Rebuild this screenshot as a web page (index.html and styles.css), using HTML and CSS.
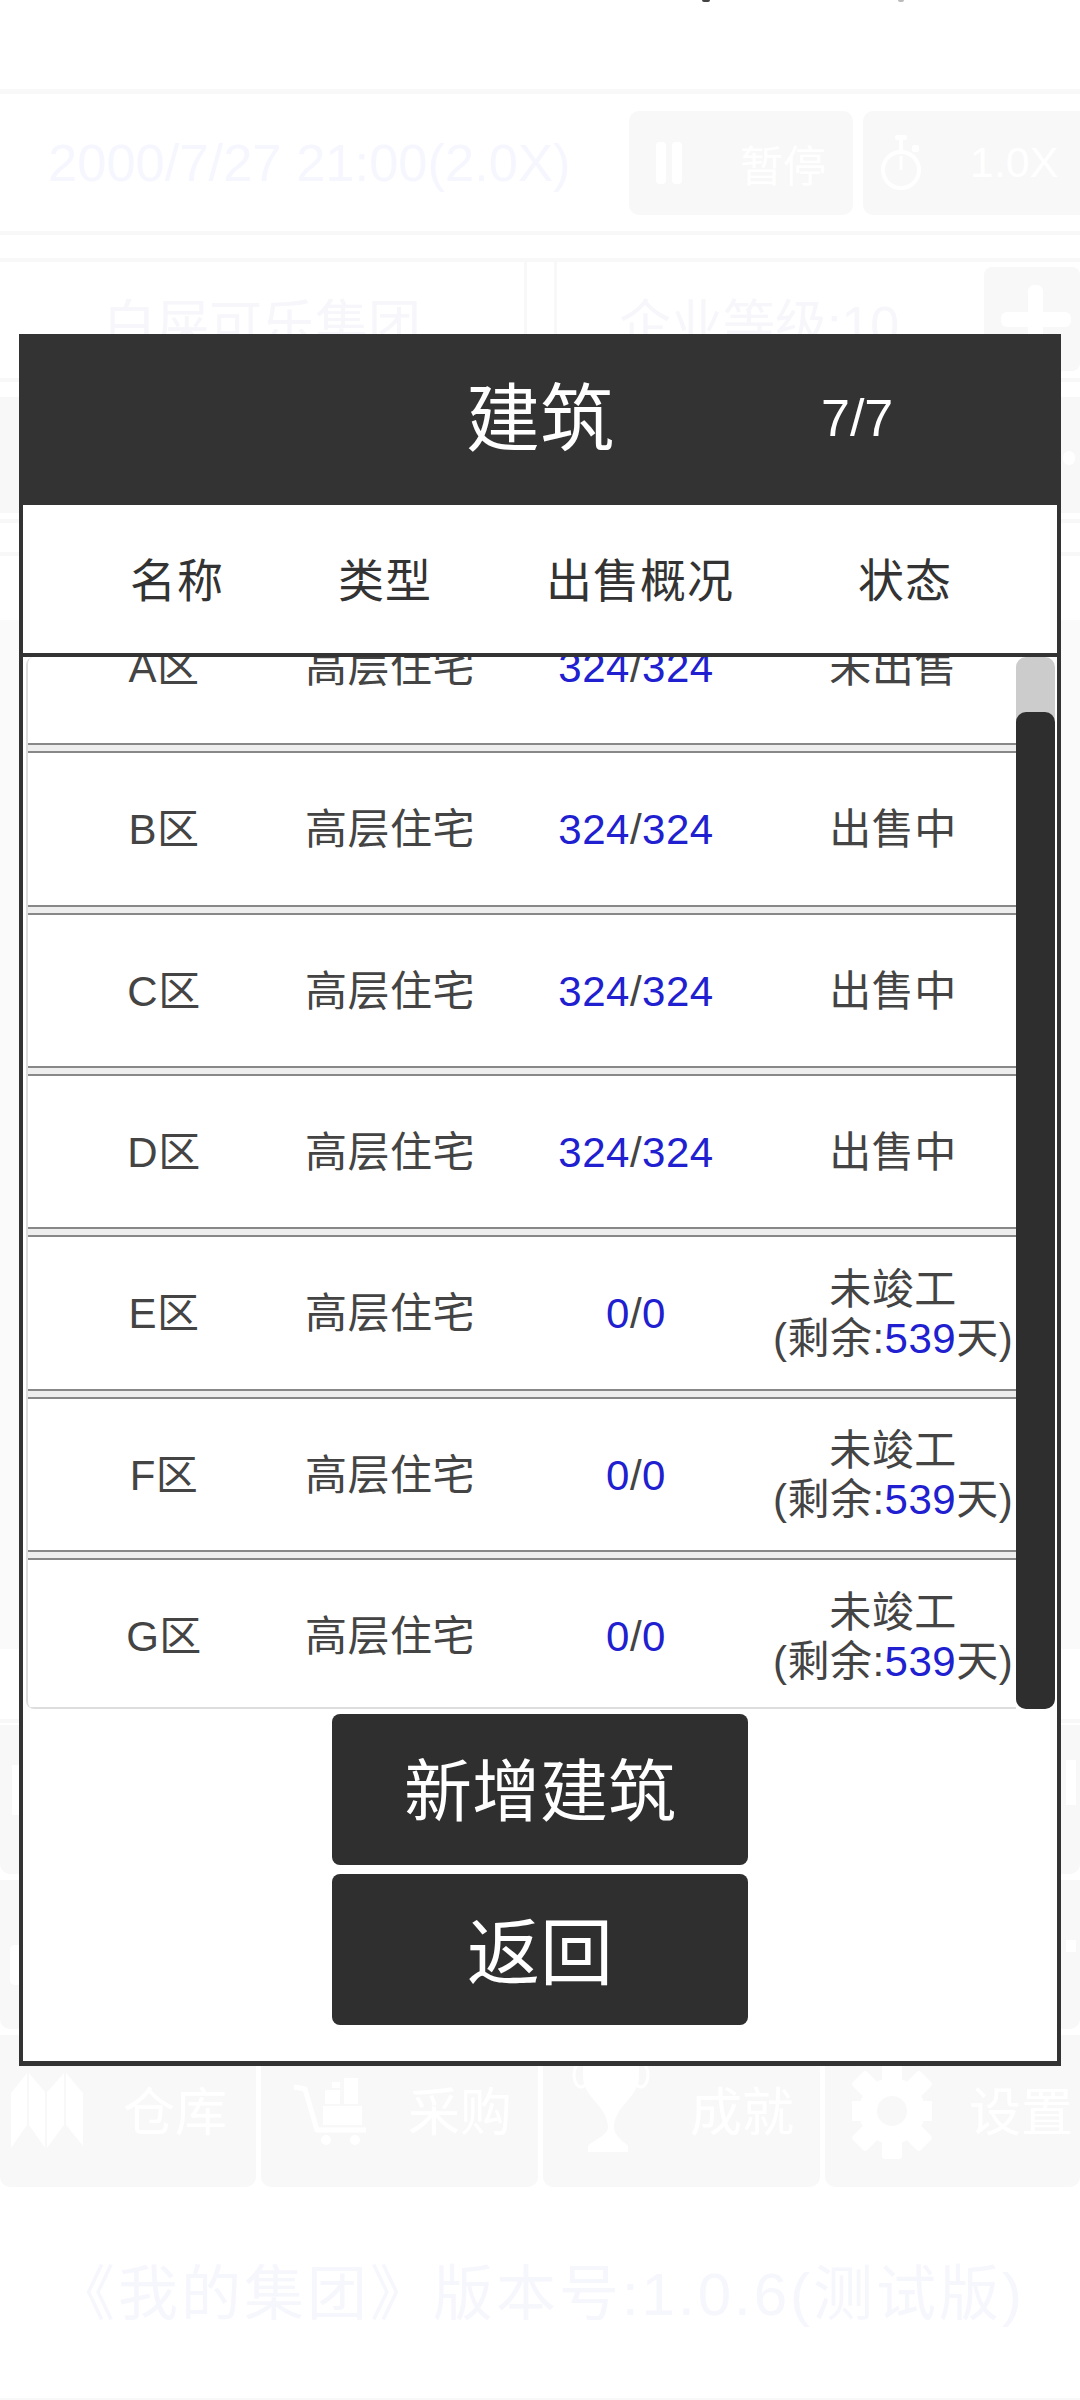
FILE: index.html
```html
<!DOCTYPE html>
<html lang="zh-cn">
<head>
    <meta charset="UTF-8">
    <title>我的集团</title>
    <link rel="stylesheet" href="styles.css">
</head>
<body>
    <!-- 背景页面 (被弹窗遮住, 颜色很淡) -->
    <div class="page">
        <div class="status-bar">
            <span class="status-mark status-mark-left"></span>
            <span class="status-mark status-mark-right"></span>
        </div>
        <div class="rule"></div>

        <div class="clock-row">
            <div class="clock-text">2000/7/27 21:00(2.0X)</div>
            <div class="clock-btn clock-btn-pause">
                <svg class="clock-icon" width="30" height="44" viewBox="0 0 30 44">
                    <rect x="2" y="1" width="10" height="42" rx="4" fill="#fff"/>
                    <rect x="18" y="1" width="10" height="42" rx="4" fill="#fff"/>
                </svg>
                <span class="clock-btn-label">暂停</span>
            </div>
            <div class="clock-btn clock-btn-speed">
                <svg class="clock-icon" width="44" height="60" viewBox="0 0 44 60">
                    <circle cx="22" cy="37" r="18" fill="none" stroke="#fff" stroke-width="4"/>
                    <rect x="16" y="2" width="12" height="5" rx="2" fill="#fff"/>
                    <rect x="20" y="6" width="4" height="12" fill="#fff"/>
                    <rect x="33" y="12" width="7" height="7" rx="2" fill="#fff"/>
                    <path d="M22 23 L22 37" stroke="#fff" stroke-width="3"/>
                </svg>
                <span class="clock-btn-label">1.0X</span>
            </div>
        </div>

        <div class="rule rule-thin"></div>
        <div class="rule rule-thin rule-gap"></div>

        <div class="company-row">
            <div class="company-box company-name">白屎可乐集团</div>
            <div class="company-box company-level">企业等级:10</div>
            <div class="plus-btn">
                <svg width="70" height="86" viewBox="0 0 70 86">
                    <rect x="27" y="0" width="15" height="86" rx="6" fill="#fff"/>
                    <rect x="0" y="27" width="70" height="15" rx="6" fill="#fff"/>
                </svg>
            </div>
        </div>

        <div class="rule rule-thin rule-after-company"></div>
        <div class="rule rule-thin rule-gap-small"></div>
        <div class="fund-row"><span class="fund-dot"></span></div>
        <div class="rule rule-thin rule-after-fund"></div>
        <div class="rule rule-thin rule-gap-wide"></div>

        <div class="panel"></div>

        <div class="rule rule-thin rule-after-panel"></div>
        <div class="tabs tabs-hidden">
            <div class="tab"><span class="tab-bit tab-bit-left"></span></div>
            <div class="tab"></div>
            <div class="tab"></div>
            <div class="tab"><span class="tab-bit tab-bit-right"></span></div>
        </div>
        <div class="tabs tabs-hidden">
            <div class="tab"><span class="tab-bit tab-bit-round"></span></div>
            <div class="tab"></div>
            <div class="tab"></div>
            <div class="tab"><span class="tab-bit tab-bit-right tab-bit-flat"></span></div>
        </div>

        <div class="tabs tabs-main">
            <div class="tab tab-store">
                <svg width="80" height="90" viewBox="0 0 80 90">
                    <polygon points="4,27 20,7 20,59 4,82" fill="#fff"/>
                    <polygon points="22,7 38,26 38,82 22,59" fill="#fff"/>
                    <polygon points="40,26 57,7 57,59 40,82" fill="#fff"/>
                    <polygon points="59,7 76,27 76,80 59,59" fill="#fff"/>
                </svg>
                <span class="tab-label">仓库</span>
            </div>
            <div class="tab tab-buy">
                <svg width="80" height="90" viewBox="0 0 80 90">
                    <path d="M4 21 L15 23 L27 64 L76 64" fill="none" stroke="#fff" stroke-width="5" stroke-linejoin="round"/>
                    <rect x="33" y="40" width="39" height="19" fill="#fff"/>
                    <rect x="35" y="24" width="15" height="14" fill="#fff"/>
                    <rect x="42" y="16" width="8" height="6" fill="#fff"/>
                    <rect x="54" y="12" width="14" height="26" fill="#fff"/>
                    <circle cx="36" cy="74" r="5" fill="#fff"/>
                    <circle cx="65" cy="74" r="5" fill="#fff"/>
                </svg>
                <span class="tab-label">采购</span>
            </div>
            <div class="tab tab-goal">
                <svg width="80" height="110" viewBox="0 0 80 110">
                    <path d="M13 0 L69 0 L69 28 C69 50 46 56 44 78 C44 88 50 90 58 98 L58 104 L18 104 L18 98 C26 90 38 88 38 78 C36 56 13 50 13 28 Z" fill="#fff"/>
                    <ellipse cx="11" cy="27" rx="7" ry="12" fill="none" stroke="#fff" stroke-width="3"/>
                    <ellipse cx="71" cy="27" rx="7" ry="12" fill="none" stroke="#fff" stroke-width="3"/>
                </svg>
                <span class="tab-label">成就</span>
            </div>
            <div class="tab tab-set">
                <svg width="80" height="100" viewBox="0 0 80 100">
                    <g fill="#fff">
                        <rect x="30" y="2" width="20" height="96" rx="3"/>
                        <rect x="30" y="2" width="20" height="96" rx="3" transform="rotate(45 40 50)"/>
                        <rect x="30" y="2" width="20" height="96" rx="3" transform="rotate(90 40 50)"/>
                        <rect x="30" y="2" width="20" height="96" rx="3" transform="rotate(135 40 50)"/>
                        <circle cx="40" cy="50" r="33"/>
                    </g>
                    <circle cx="40" cy="50" r="15" fill="#f8f8f8"/>
                </svg>
                <span class="tab-label">设置</span>
            </div>
        </div>

        <div class="version">《我的集团》版本号:1.0.6(测试版)</div>
        <div class="rule rule-thin rule-bottom"></div>
    </div>

    <!-- 建筑弹窗 -->
    <div class="modal">
        <div class="modal-head">
            <span></span>
            <span class="modal-title">建筑</span>
            <span class="modal-count">7/7</span>
        </div>

        <div class="col-head">
            <span>名称</span>
            <span>类型</span>
            <span>出售概况</span>
            <span>状态</span>
        </div>

        <div class="list">
            <div class="list-inner">
                <div class="row">
                    <span>A区</span>
                    <span>高层住宅</span>
                    <span><b class="num">324</b>/<b class="num">324</b></span>
                    <span>未出售</span>
                </div>
                <div class="row">
                    <span>B区</span>
                    <span>高层住宅</span>
                    <span><b class="num">324</b>/<b class="num">324</b></span>
                    <span>出售中</span>
                </div>
                <div class="row">
                    <span>C区</span>
                    <span>高层住宅</span>
                    <span><b class="num">324</b>/<b class="num">324</b></span>
                    <span>出售中</span>
                </div>
                <div class="row">
                    <span>D区</span>
                    <span>高层住宅</span>
                    <span><b class="num">324</b>/<b class="num">324</b></span>
                    <span>出售中</span>
                </div>
                <div class="row">
                    <span>E区</span>
                    <span>高层住宅</span>
                    <span><b class="num">0</b>/<b class="num">0</b></span>
                    <span class="status-two">未竣工<br>(剩余:<b class="num">539</b>天)</span>
                </div>
                <div class="row">
                    <span>F区</span>
                    <span>高层住宅</span>
                    <span><b class="num">0</b>/<b class="num">0</b></span>
                    <span class="status-two">未竣工<br>(剩余:<b class="num">539</b>天)</span>
                </div>
                <div class="row">
                    <span>G区</span>
                    <span>高层住宅</span>
                    <span><b class="num">0</b>/<b class="num">0</b></span>
                    <span class="status-two">未竣工<br>(剩余:<b class="num">539</b>天)</span>
                </div>
            </div>
            <div class="scroll-track"><div class="scroll-thumb"></div></div>
        </div>

        <div class="actions">
            <button type="button" class="action-btn">新增建筑</button>
            <button type="button" class="action-btn action-btn-back">返回</button>
        </div>
    </div>
</body>
</html>
```
FILE: styles.css
```css
* {
    box-sizing: border-box;
}
body {
    margin: 0;
    width: 1080px;
    height: 2400px;
    overflow: hidden;
    position: relative;
    background-color: #fff;
    font-family: "Liberation Sans", "Noto Sans CJK SC", sans-serif;
    color: #333;
}

/* 背景页面 */
.status-bar {
    height: 89px;
    position: relative;
}
.status-mark {
    position: absolute;
    top: 0;
    height: 2px;
    border-radius: 0 0 3px 3px;
}
.status-mark-left {
    left: 702px;
    width: 8px;
    background-color: #444;
}
.status-mark-right {
    left: 898px;
    width: 6px;
    background-color: #bbb;
}
.rule {
    height: 5px;
    background-color: #f8f8f8;
}
.rule-thin {
    height: 4px;
}
.rule-gap {
    margin-top: 23px;
}
.rule-after-company {
    margin-top: 3px;
}
.rule-gap-small {
    margin-top: 15px;
}
.rule-after-fund {
    margin-top: 6px;
}
.rule-gap-wide {
    margin-top: 29px;
}
.rule-after-panel {
    margin-top: 70px;
}
.clock-row {
    height: 137px;
    display: flex;
    align-items: center;
    padding-left: 48px;
}
.clock-text {
    width: 581px;
    flex: none;
    font-size: 52.5px;
    color: #f6f6ff;
    white-space: nowrap;
}
.clock-btn {
    height: 104px;
    background-color: #f8f8f8;
    border-radius: 10px;
    display: flex;
    align-items: center;
    flex: none;
}
.clock-btn-pause {
    width: 224px;
    padding-left: 25px;
}
.clock-btn-speed {
    width: 230px;
    margin-left: 10px;
    padding-left: 16px;
}
.clock-btn-pause .clock-btn-label {
    margin-left: 56px;
}
.clock-btn-speed .clock-btn-label {
    margin-left: 47px;
}
.clock-icon {
    flex: none;
}
.clock-btn-label {
    font-size: 43px;
    color: #fff;
    white-space: nowrap;
}
.company-row {
    height: 113px;
    display: flex;
    position: relative;
}
.company-box {
    font-size: 53px;
    color: #f6f6fb;
    white-space: nowrap;
    padding-top: 21px;
}
.company-name {
    width: 527px;
    padding-left: 103px;
    border-right: 3px solid #f8f8f8;
}
.company-level {
    width: 430px;
    margin-left: 27px;
    padding-left: 62px;
    border-left: 3px solid #f8f8f8;
    font-size: 52px;
}
.plus-btn {
    width: 96px;
    height: 104px;
    margin-top: 5px;
    background-color: #f8f8f8;
    border-radius: 8px;
    padding: 18px 0 0 17px;
}
.fund-row {
    height: 112px;
    background-color: #f8f8f8;
    position: relative;
}
.fund-dot {
    position: absolute;
    right: 5px;
    top: 50px;
    width: 12px;
    height: 14px;
    border-radius: 7px;
    background-color: #fff;
}
.panel {
    height: 1029px;
    margin-top: 64px;
    background-color: #fafafa;
}
.tabs {
    display: flex;
    gap: 5px;
    margin-top: 5px;
}
.tabs-hidden {
    height: 149px;
    margin-top: 2px;
}
.tabs-hidden + .tabs-hidden {
    margin-top: 6px;
}
.tabs-main {
    height: 152px;
    margin-top: 6px;
}
.tab {
    width: 277px;
    background-color: #f8f8f8;
    border-radius: 0 0 10px 10px;
    display: flex;
    align-items: center;
    position: relative;
    padding-left: 27px;
    gap: 40px;
}
.tab:first-child {
    width: 256px;
}
.tab:last-child {
    width: 255px;
}
.tabs-main .tab-store {
    padding-left: 7px;
    gap: 36px;
}
.tabs-main .tab-buy {
    padding-left: 29px;
    gap: 38px;
}
.tabs-main .tab-set {
    gap: 37px;
}
.tab svg {
    flex: none;
}
.tab-goal svg {
    margin-top: -16px;
}
.tab-label {
    font-size: 52px;
    color: #fff;
    white-space: nowrap;
    padding-bottom: 6px;
}
.tab-bit {
    position: absolute;
    background-color: #fff;
}
.tab-bit-left {
    left: 12px;
    top: 40px;
    width: 8px;
    height: 50px;
}
.tab-bit-round {
    left: 10px;
    top: 65px;
    width: 10px;
    height: 40px;
    border-radius: 5px 0 0 5px;
}
.tab-bit-right {
    right: 4px;
    top: 35px;
    width: 10px;
    height: 45px;
}
.tab-bit-flat {
    top: 60px;
    height: 12px;
}
.version {
    height: 211px;
    display: flex;
    align-items: center;
    justify-content: center;
    font-size: 60px;
    letter-spacing: 3px;
    color: #f6f6fd;
    white-space: nowrap;
    padding-bottom: 8px;
}

/* 弹窗 */
.modal {
    position: absolute;
    left: 19px;
    top: 334px;
    width: 1042px;
    height: 1732px;
    background-color: #fff;
    border: 4px solid #333;
    border-top: none;
    border-bottom-width: 5px;
}
.modal-head {
    height: 171px;
    margin: 0 -4px;
    background-color: #333;
    color: #fff;
    display: grid;
    grid-template-columns: 1fr auto 1fr;
    align-items: center;
}
.modal-title {
    font-size: 74px;
    line-height: 1;
}
.modal-count {
    font-size: 52px;
    line-height: 1;
    margin-left: 207px;
    padding-bottom: 3px;
}
.col-head {
    height: 152px;
    display: grid;
    grid-template-columns: 308px 108px 402px 128px;
    align-items: center;
    justify-items: center;
    font-size: 46px;
    letter-spacing: 1px;
    border-bottom: 4px solid #333;
    white-space: nowrap;
    padding-bottom: 4px;
}
.list {
    height: 1052px;
    margin-left: 3px;
    margin-right: 2px;
    overflow: hidden;
    position: relative;
    border-left: 2px solid #ddd;
    border-radius: 8px 0 8px 8px;
}
.list::after {
    content: "";
    position: absolute;
    left: 0;
    right: 39px;
    bottom: 0;
    height: 2px;
    background-color: #ddd;
}
.list-inner {
    margin-top: -67px;
    display: flex;
    flex-direction: column;
    gap: 6px;
    background-color: #eee;
    width: 989px;
}
.row {
    height: 155.33px;
    flex: none;
    background-color: #fff;
    border-top: 2px solid #888;
    border-bottom: 2px solid #888;
    display: grid;
    grid-template-columns: 272px 180px 312px 202px;
    align-items: center;
    justify-items: center;
    font-size: 42px;
    letter-spacing: 0.5px;
    line-height: 49px;
    color: #444;
    white-space: nowrap;
    padding-top: 2px;
}
.row:first-child {
    border-top: none;
}
.num {
    font-weight: normal;
    color: #2020d0;
}
.status-two {
    text-align: center;
}
.scroll-track {
    position: absolute;
    right: 0;
    top: 0;
    bottom: 0;
    width: 39px;
    background-color: #ccc;
    border-radius: 10px;
    padding-top: 55px;
}
.scroll-thumb {
    height: 100%;
    background-color: #2e2e2e;
    border-radius: 10px;
}
.actions {
    display: flex;
    flex-direction: column;
    align-items: center;
    gap: 9px;
    margin-top: 5px;
}
.action-btn {
    width: 416px;
    height: 151px;
    border: none;
    border-radius: 8px;
    background-color: #2f2f2f;
    color: #fff;
    font-family: inherit;
    font-size: 68px;
    padding: 0 0 6px;
}
.action-btn-back {
    font-size: 73px;
}
```
